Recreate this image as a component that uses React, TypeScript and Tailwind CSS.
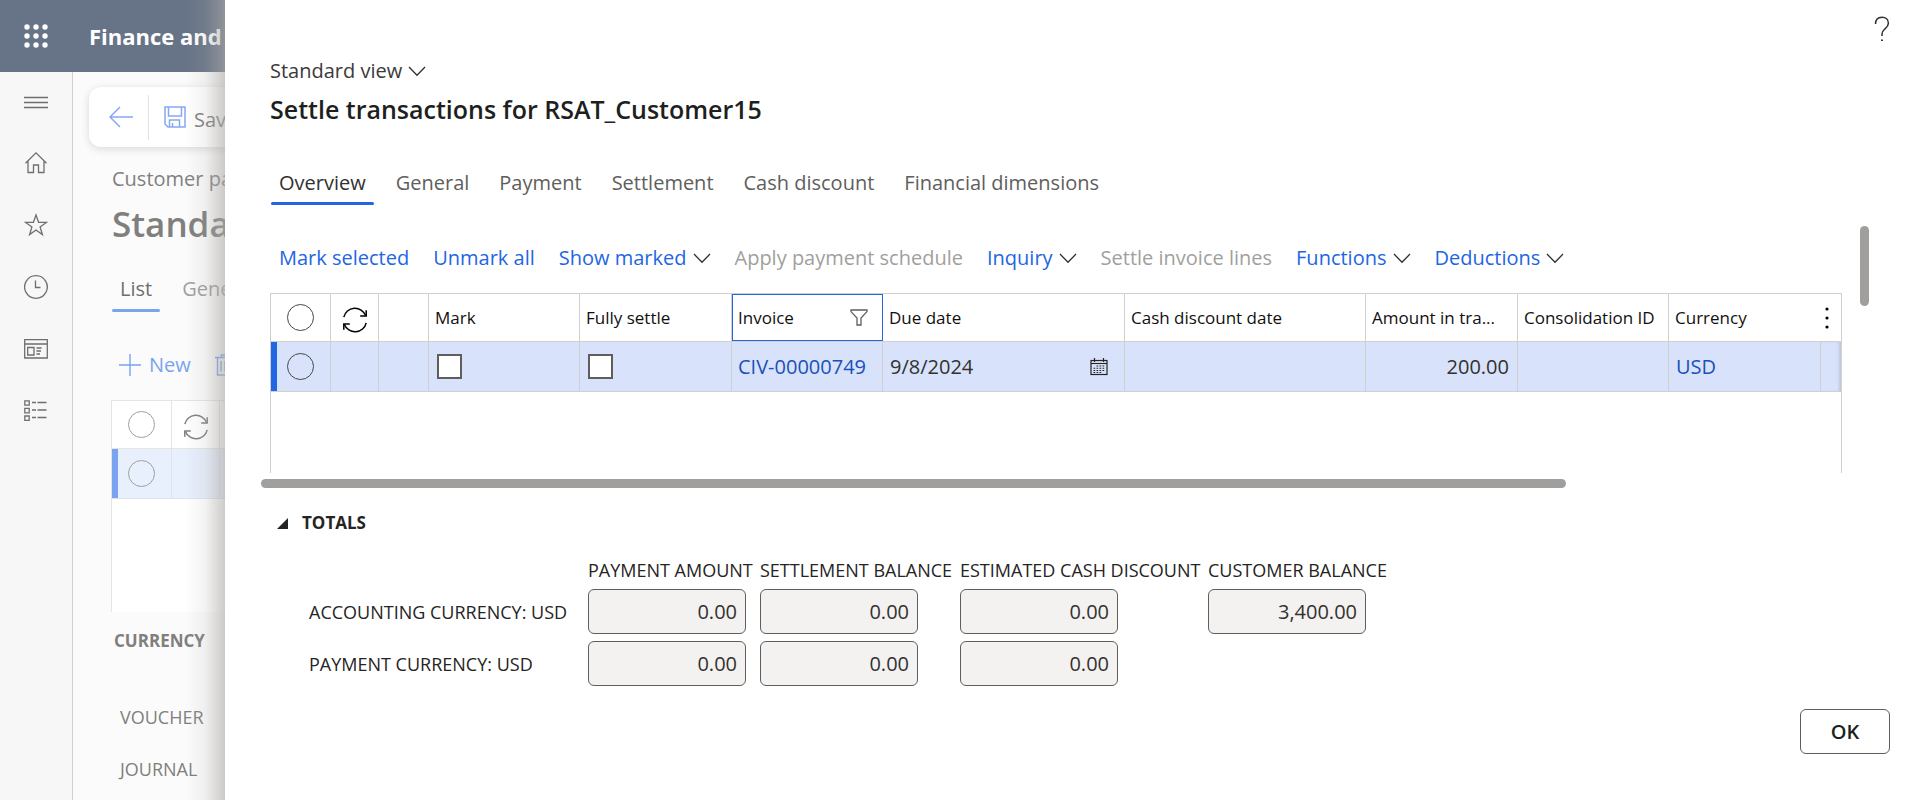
import type { ReactNode } from "react";

const stroke = { fill: "none", stroke: "currentColor" } as const;

function Chevron() {
  return (
    <svg width="18" height="11" viewBox="0 0 18 11" className="shrink-0 text-[#323130]" {...stroke} strokeWidth="1.3" aria-hidden="true">
      <path d="M1 1 L9 9.2 L17 1" />
    </svg>
  );
}

function SyncIcon() {
  return (
    <svg width="26" height="26" viewBox="0 0 26 26" className="inline-block" {...stroke} strokeWidth="1.5" aria-hidden="true">
      <path d="M1.8 10.2 A11.4 11.4 0 0 1 23.6 8.6" />
      <path d="M24.2 3.2 V9 H18.2" />
      <path d="M24.2 15.8 A11.4 11.4 0 0 1 2.4 17.4" />
      <path d="M1.8 22.8 V17 H7.8" />
    </svg>
  );
}

function HelpIcon() {
  return (
    <svg width="16" height="26" viewBox="0 0 16 26" {...stroke} strokeWidth="1.5" aria-hidden="true">
      <path d="M1.5 8 C1.5 3.6 4.2 1.2 8 1.2 C11.8 1.2 14.4 3.6 14.4 7.2 C14.4 10 12.8 11.2 10.8 13 C9 14.6 8 15.8 8 18 V20" />
      <path d="M8 23.4 V25" strokeWidth="1.9" />
    </svg>
  );
}

function FilterIcon() {
  return (
    <svg width="18" height="17" viewBox="0 0 18 17" className="text-[#605e5c]" {...stroke} strokeWidth="1.3" aria-hidden="true">
      <path d="M1 1 H17 V2.6 L11 9 V16 H7 V9 L1 2.6 Z" />
    </svg>
  );
}

function CalendarIcon() {
  return (
    <svg width="18" height="18" viewBox="0 0 18 18" className="text-[#252423]" {...stroke} aria-hidden="true">
      <rect x="1" y="2.5" width="16" height="14" strokeWidth="1.2" />
      <path d="M1 5.5 H17" strokeWidth="1.1" />
      <path d="M4.5 0 V4 M13.5 0 V4" strokeWidth="1.2" />
      <path d="M6.5 8 H15.5 M3.5 10.3 H15.5 M3.5 12.5 H15.5 M3.5 14.5 H12.5" strokeWidth="1.1" strokeDasharray="1.7 1.3" />
    </svg>
  );
}

const navIcons: { label: string; art: ReactNode }[] = [
  { label: "Menu", art: <path d="M0 7.5 H24 M0 12.5 H24 M0 17.5 H24" /> },
  { label: "Home", art: <path d="M1.5 12.2 L12 1.8 L22.5 12.2 M4 10 V21.5 H9.5 V14 H14.5 V21.5 H20 V10" /> },
  { label: "Favorites", art: <path d="M12 2 L14.6 9.4 H22.4 L16.1 14 L18.4 21.6 L12 17 L5.6 21.6 L7.9 14 L1.6 9.4 H9.4 Z" /> },
  { label: "Recent", art: <path d="M12 .7 A11.3 11.3 0 1 1 11.9 .7 Z M11.5 5.5 V12.5 H16.5" /> },
  {
    label: "Workspaces",
    art: <path d="M.7 2.7 H23.3 V21 H.7 Z M.7 7 H23.3 M3.7 10.5 H10 V18 H3.7 Z M12.5 11 H17.5 M12.5 14 H17 M12.5 17 H16" />,
  },
  {
    label: "Modules",
    art: (
      <path d="M.8 1.8 H5.2 V6.2 H.8 Z M.8 9.4 H5.2 V13.8 H.8 Z M.8 17 H5.2 V21.4 H.8 Z M8 3.5 H12 M13.5 3.5 H22.5 M8 11 H12 M13.5 11 H22.5 M8 18.5 H12 M13.5 18.5 H22.5" />
    ),
  },
];

const tabs = ["Overview", "General", "Payment", "Settlement", "Cash discount", "Financial dimensions"];

const actions = [
  { label: "Mark selected" },
  { label: "Unmark all" },
  { label: "Show marked", menu: true },
  { label: "Apply payment schedule", disabled: true },
  { label: "Inquiry", menu: true },
  { label: "Settle invoice lines", disabled: true },
  { label: "Functions", menu: true },
  { label: "Deductions", menu: true },
];

const totalColumns = ["PAYMENT AMOUNT", "SETTLEMENT BALANCE", "ESTIMATED CASH DISCOUNT", "CUSTOMER BALANCE"];
const totalRows = [
  { label: "ACCOUNTING CURRENCY: USD", values: ["0.00", "0.00", "0.00", "3,400.00"] },
  { label: "PAYMENT CURRENCY: USD", values: ["0.00", "0.00", "0.00"] },
];

const round = "block mx-auto size-[27px] appearance-none rounded-full border border-[#484644]";
const cell = "border-r border-b border-[#d2d0ce] p-0 align-middle";
const head = cell + " px-1.5 text-left text-[17px] font-medium leading-6 whitespace-nowrap text-[#11100f]";
const box = "block size-[25px] appearance-none border-2 border-[#605e5c] bg-white";

function BackgroundPage() {
  return (
    <div className="flex min-h-screen flex-col bg-[#fbfbfb]">
      <header className="flex h-[72px] shrink-0 items-center bg-[#677386] text-white">
        <button type="button" aria-label="App launcher" className="flex w-[72px] justify-center">
          <svg width="24" height="24" viewBox="0 0 24 24" fill="currentColor" aria-hidden="true">
            {[3, 12, 21].map((y) => [3, 12, 21].map((x) => <circle key={`${x}-${y}`} cx={x} cy={y} r="2.7" />))}
          </svg>
        </button>
        <span className="pl-[17px] text-[22px] leading-8 font-bold">Finance and</span>
      </header>
      <div className="flex flex-1">
        <nav className="flex w-[73px] shrink-0 flex-col border-r border-[#d2d0ce] bg-[#f7f7f7] text-[#6f6e6d]">
          {navIcons.map((n) => (
            <button key={n.label} type="button" aria-label={n.label} className="flex h-[62px] items-center justify-center first:h-[60px]">
              <svg width="24" height="24" viewBox="0 0 24 24" {...stroke} strokeWidth="1.3" aria-hidden="true">
                {n.art}
              </svg>
            </button>
          ))}
        </nav>
        <main className="flex-1 text-[20px] leading-7 text-[#807f7e]">
          <div className="mt-[15px] ml-4 flex h-[60px] items-center rounded-l-xl bg-white shadow-[0_2px_8px_rgba(0,0,0,0.14)]">
            <button type="button" aria-label="Back" className="flex w-[59px] justify-center pl-1 text-[#86a8f3]">
              <svg width="24" height="22" viewBox="0 0 24 22" {...stroke} strokeWidth="1.5" aria-hidden="true">
                <path d="M11 1 L1 11 L11 21 M1 11 H24" />
              </svg>
            </button>
            <div className="h-[45px] border-l border-[#e3e2e1]" />
            <button type="button" className="flex items-center gap-2 pl-[15px]">
              <svg width="22" height="22" viewBox="0 0 22 22" className="text-[#86a8f3]" {...stroke} strokeWidth="1.5" aria-hidden="true">
                <path d="M1 1 H21 V21 H4 L1 18 Z M4.5 1 V10 H17.5 V1 M5.5 21 V14 H15.5 V21 M8.5 21 V17" />
              </svg>
              <span className="pt-1.5">Sav</span>
            </button>
          </div>
          <div className="pt-[18px] pl-[39px]">
            <p>Customer pa</p>
            <h1 className="mt-[7px] text-[35px] leading-[48px] font-semibold">Standa</h1>
            <div role="tablist" className="mt-[27px] flex gap-3.5">
              <button type="button" role="tab" aria-selected="true" className="px-2 text-[#6f6e6d]">
                List
                <span className="-mx-2 mt-1.5 block h-[3px] rounded-full bg-[#7aa3f0]" />
              </button>
              <button type="button" role="tab" aria-selected="false" className="px-2 pb-[9px] text-[#a09f9e]">
                Gene
              </button>
            </div>
            <div className="mt-[39px] flex items-center gap-6 pl-[7px] text-[#7aa3f0]">
              <button type="button" className="flex items-center gap-2">
                <svg width="22" height="22" viewBox="0 0 22 22" {...stroke} strokeWidth="1.4" aria-hidden="true">
                  <path d="M11 0 V22 M0 11 H22" />
                </svg>
                New
              </button>
              <button type="button" aria-label="Delete">
                <svg width="20" height="22" viewBox="0 0 20 22" className="block" {...stroke} strokeWidth="1.4" aria-hidden="true">
                  <path d="M0 3.5 H20 M6.5 3.5 V1 H13.5 V3.5 M2.5 3.5 V21 H17.5 V3.5 M6 7 V17.5 M10 7 V17.5 M14 7 V17.5" />
                </svg>
              </button>
            </div>
          </div>
          <div className="mt-[21px] ml-[38px] h-[212px] border-t border-l border-[#e6e5e4] bg-white">
            <table className="w-full table-fixed border-separate border-spacing-0">
              <colgroup>
                <col className="w-[60px]" />
                <col className="w-12" />
                <col />
              </colgroup>
              <thead>
                <tr className="h-12">
                  <th className="border-r border-b border-[#e6e5e4] p-0">
                    <input type="checkbox" aria-label="Select all journals" className="mx-auto block size-[27px] appearance-none rounded-full border border-[#a09f9e]" />
                  </th>
                  <th className="border-r border-b border-[#e6e5e4] p-0 pt-1 leading-none text-[#807f7e]">
                    <SyncIcon />
                  </th>
                  <th className="border-b border-[#e6e5e4] p-0" />
                </tr>
              </thead>
              <tbody>
                <tr className="h-[50px] bg-[#e8effd]">
                  <td className="border-r border-b border-[#e0e3ea] bg-linear-to-r from-[#7aa3f0] from-10% to-transparent to-10% p-0">
                    <input type="checkbox" aria-label="Select journal" className="mx-auto block size-[27px] appearance-none rounded-full border border-[#a09f9e]" />
                  </td>
                  <td className="border-r border-b border-[#e0e3ea] p-0" />
                  <td className="border-b border-[#e0e3ea] p-0" />
                </tr>
              </tbody>
            </table>
          </div>
          <div className="pt-[17px] pl-[41px] text-[18px] leading-6">
            <h2 className="text-[17px] font-bold">CURRENCY</h2>
            <p className="mt-[52px] pl-1.5">VOUCHER</p>
            <p className="mt-7 pl-1.5">JOURNAL</p>
          </div>
        </main>
      </div>
    </div>
  );
}

function TransactionsGrid() {
  return (
    <div className="mr-[78px] ml-[45px] h-[180px] border-x border-t border-[#d2d0ce] bg-white">
      <table className="w-full table-fixed border-separate border-spacing-0">
        <colgroup>
          <col className="w-[60px]" />
          <col className="w-12" />
          <col className="w-[50px]" />
          <col className="w-[151px]" />
          <col className="w-[152px]" />
          <col className="w-[151px]" />
          <col className="w-[242px]" />
          <col className="w-[241px]" />
          <col className="w-[152px]" />
          <col className="w-[151px]" />
          <col className="w-[152px]" />
          <col />
        </colgroup>
        <thead>
          <tr className="h-12">
            <th className={cell}>
              <input type="checkbox" aria-label="Select all transactions" className={round} />
            </th>
            <th className={cell + " pt-1 leading-none"}>
              <SyncIcon />
            </th>
            <th className={cell} />
            <th className={head}>Mark</th>
            <th className={head}>Fully settle</th>
            <th className={cell + " text-[17px] font-medium text-[#11100f]"}>
              <div className="-mr-px flex h-[47px] items-center justify-between border border-[#2266e3] pr-3.5 pl-[5px]">
                Invoice
                <button type="button" aria-label="Filter invoice">
                  <FilterIcon />
                </button>
              </div>
            </th>
            <th className={head}>Due date</th>
            <th className={head}>Cash discount date</th>
            <th className={head}>Amount in tra...</th>
            <th className={head + " overflow-hidden"}>Consolidation ID</th>
            <th className="border-b border-[#d2d0ce] px-1.5 text-left text-[17px] leading-6 font-medium text-[#11100f]">Currency</th>
            <th className="border-b border-[#d2d0ce] p-0">
              <button type="button" aria-label="Grid options" className="-ml-1 flex w-5 justify-center">
                <svg width="4" height="22" viewBox="0 0 4 22" fill="currentColor" aria-hidden="true">
                  <circle cx="2" cy="2" r="1.6" />
                  <circle cx="2" cy="11" r="1.6" />
                  <circle cx="2" cy="20" r="1.6" />
                </svg>
              </button>
            </th>
          </tr>
        </thead>
        <tbody>
          <tr className="h-[50px] bg-[#d8e3fb] text-[20px] leading-7 text-[#323130]">
            <td className={cell + " bg-linear-to-r from-[#2266e3] from-10% to-transparent to-10%"}>
              <input type="checkbox" aria-label="Select transaction CIV-00000749" className={round} />
            </td>
            <td className={cell} />
            <td className={cell} />
            <td className={cell + " pl-2"}>
              <input type="checkbox" aria-label="Mark" className={box} />
            </td>
            <td className={cell + " pl-2"}>
              <input type="checkbox" aria-label="Fully settle" className={box} />
            </td>
            <td className={cell + " pl-1.5 text-[#1a50b8]"}>
              <a href="#invoice">CIV-00000749</a>
            </td>
            <td className={cell + " pr-4 pl-[7px]"}>
              <div className="flex items-center justify-between">
                9/8/2024
                <button type="button" aria-label="Choose date">
                  <CalendarIcon />
                </button>
              </div>
            </td>
            <td className={cell} />
            <td className={cell + " pr-2 text-right"}>200.00</td>
            <td className={cell} />
            <td className={cell + " pl-[7px] text-[#1a50b8]"}>
              <a href="#currency">USD</a>
            </td>
            <td className={cell + " border-r-0 shadow-[inset_-3px_0_3px_-1px_#b9c6dd]"} />
          </tr>
        </tbody>
      </table>
    </div>
  );
}

function Totals() {
  return (
    <section className="mt-[23px] pl-[52px] text-[#252423]">
      <button type="button" className="flex items-center gap-3.5 text-[17px] leading-6 font-bold">
        <svg width="11" height="11" viewBox="0 0 11 11" fill="currentColor" aria-hidden="true">
          <path d="M11 0 V11 H0 Z" />
        </svg>
        TOTALS
      </button>
      <div className="mt-[23px] grid grid-cols-[279px_172px_200px_248px_auto] items-center justify-start pl-8 text-[18px] leading-6">
        <span />
        {totalColumns.map((c) => (
          <span key={c} className="whitespace-nowrap">
            {c}
          </span>
        ))}
        {totalRows.map((r) => (
          <div key={r.label} className="col-span-5 mt-[7px] grid grid-cols-subgrid items-center">
            <span className="whitespace-nowrap">{r.label}</span>
            {r.values.map((v, i) => (
              <input
                key={totalColumns[i]}
                type="text"
                readOnly
                value={v}
                aria-label={`${totalColumns[i]}, ${r.label}`}
                className="h-[45px] w-[158px] rounded-md border border-[#605e5c] bg-[#f3f2f1] px-2 text-right text-[20px] leading-7 text-[#323130]"
              />
            ))}
          </div>
        ))}
      </div>
    </section>
  );
}

export default function App() {
  return (
    <div className="relative overflow-hidden font-['Open_Sans',sans-serif]">
      <BackgroundPage />
      <div className="absolute inset-y-0 left-[225px] right-0 flex">
        <div className="pointer-events-none absolute inset-y-0 -left-10 w-10 bg-linear-to-r from-transparent via-[rgba(171,169,167,0.14)] to-[rgba(171,169,167,0.6)]" />
        <div role="dialog" aria-label="Settle transactions for RSAT_Customer15" className="flex flex-1 flex-col bg-white">
          <div className="flex items-start justify-between pr-7 pl-[45px]">
            <div className="pt-[57px]">
              <button type="button" className="flex items-center gap-1.5 text-[20px] leading-7 text-[#3b3a39]">
                Standard view <Chevron />
              </button>
              <h1 className="mt-1.5 text-[25px] leading-9 font-semibold text-[#201f1e]">Settle transactions for RSAT_Customer15</h1>
            </div>
            <button type="button" aria-label="Help" className="mt-4 mr-0.5 text-[#323130]">
              <HelpIcon />
            </button>
          </div>
          <div role="tablist" className="mt-[42px] flex gap-3.5 pl-[46px] text-[20px] leading-7">
            {tabs.map((t, i) => (
              <button key={t} type="button" role="tab" aria-selected={i === 0} className={i === 0 ? "px-2 text-[#323130]" : "px-2 pb-2 text-[#605e5c]"}>
                {t}
                {i === 0 && <span className="-mx-2 mt-[5px] block h-[3px] rounded-full bg-[#2266e3]" />}
              </button>
            ))}
          </div>
          <div className="relative">
            <div className="mt-[39px] mb-[21px] flex gap-6 pl-[54px] text-[20px] leading-7">
              {actions.map((a) => (
                <button
                  key={a.label}
                  type="button"
                  disabled={a.disabled}
                  className={a.disabled ? "flex items-center gap-1.5 text-[#a19f9d]" : "flex items-center gap-1.5 text-[#2266e3]"}
                >
                  {a.label}
                  {a.menu && <Chevron />}
                </button>
              ))}
            </div>
            <TransactionsGrid />
            <div className="absolute top-[21px] right-[51px] h-20 w-[9px] rounded-full bg-[#a19f9d]" />
          </div>
          <div className="mt-1.5 ml-9 h-[9px] w-[77%] rounded-full bg-[#a19f9d]" />
          <Totals />
          <div className="mt-[23px] flex justify-end pr-[30px]">
            <button type="button" className="h-[45px] w-[90px] rounded-md border border-[#605e5c] bg-white text-[20px] leading-7 font-semibold text-[#201f1e]">
              OK
            </button>
          </div>
        </div>
      </div>
    </div>
  );
}
